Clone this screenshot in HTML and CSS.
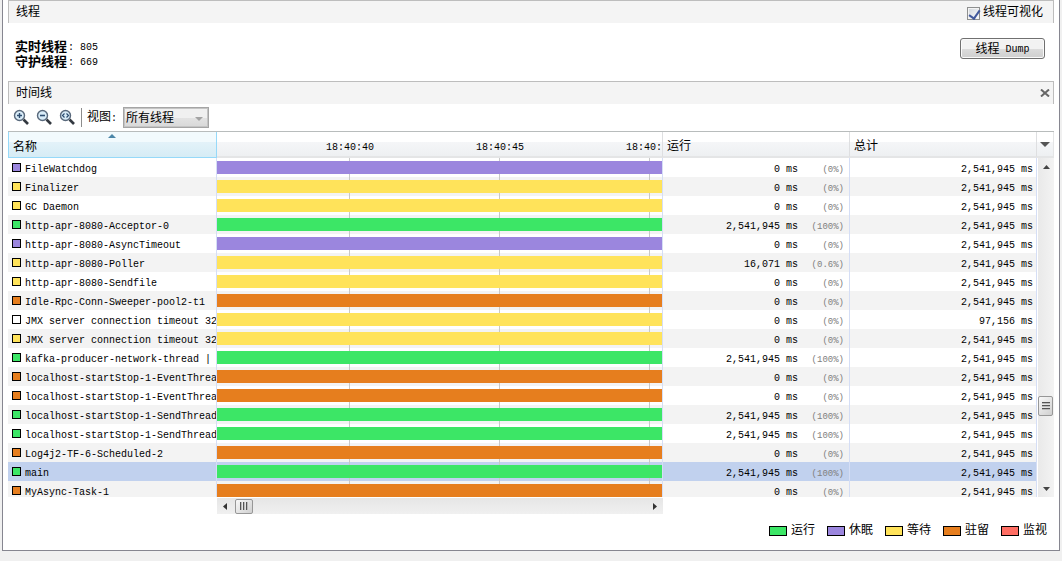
FILE: index.html
```html
<!DOCTYPE html>
<html lang="zh-CN">
<head>
<meta charset="utf-8">
<title>线程</title>
<link rel="stylesheet" href="styles.css">
</head>
<body>
<main class="frame">
  <header class="section-bar">
    <h2 class="section-title">线程</h2>
    <label class="check" for="visual"><input class="check-box" type="checkbox" id="visual" checked>线程可视化</label>
  </header>

  <section class="summary">
    <dl class="counts">
      <div class="count"><dt>实时线程</dt><dd>: 805</dd></div>
      <div class="count"><dt>守护线程</dt><dd>: 669</dd></div>
    </dl>
    <button class="dump" type="button">线程 <span class="mono">Dump</span></button>
  </section>

  <header class="section-bar timeline-bar">
    <h2 class="section-title">时间线</h2>
    <button class="close" type="button" aria-label="关闭"><svg width="10" height="8" viewBox="0 0 10 8"><path d="M1 .5L9 7.500M9 .5L1 7.500" stroke="#666" stroke-width="2" fill="none"/></svg></button>
  </header>

  <div class="toolbar">
    <button class="tool" type="button" aria-label="放大"><svg width="17" height="17" viewBox="0 0 17 17"><path d="M10.500 10.500L15 15" stroke="#333940" stroke-width="2.600"/><circle cx="6.500" cy="6.500" r="5" fill="#d9ecf8" stroke="#59697c" stroke-width="1.400"/><path d="M4 6.500H9M6.500 4V9" stroke="#2d4d70" stroke-width="1.400"/></svg></button>
    <button class="tool" type="button" aria-label="缩小"><svg width="17" height="17" viewBox="0 0 17 17"><path d="M10.500 10.500L15 15" stroke="#333940" stroke-width="2.600"/><circle cx="6.500" cy="6.500" r="5" fill="#d9ecf8" stroke="#59697c" stroke-width="1.400"/><path d="M4 6.500H9" stroke="#2d4d70" stroke-width="1.600"/></svg></button>
    <button class="tool" type="button" aria-label="适合窗口"><svg width="17" height="17" viewBox="0 0 17 17"><path d="M10.500 10.500L15 15" stroke="#333940" stroke-width="2.600"/><circle cx="6.500" cy="6.500" r="5" fill="#d9ecf8" stroke="#59697c" stroke-width="1.400"/><path d="M5.500 4.500L3.500 6.500L5.500 8.500M7.500 4.500L9.500 6.500L7.500 8.500" stroke="#2d4d70" stroke-width="1.200" fill="none"/></svg></button>
    <span class="divider"></span>
    <label class="view-label" for="view">视图<span class="mono">:</span></label>
    <span class="select-wrap">
      <select class="select" id="view"><option>所有线程</option></select>
      <svg class="select-arrow" width="8" height="4" viewBox="0 0 8 4"><path d="M0 0H8L4 4Z" fill="#a3a3a3"/></svg>
    </span>
  </div>

  <div class="grid">
    <div class="viewport">
      <table class="threads">
        <colgroup><col class="col-name"><col><col class="col-num"><col class="col-num"></colgroup>
        <thead>
          <tr>
            <th class="sorted" scope="col">名称<svg class="sort-arrow" width="8" height="4" viewBox="0 0 8 4"><path d="M4 0L8 4H0Z" fill="#4c86a8"/></svg></th>
            <th class="times" scope="col"><div class="ticks"><span>18:40:40</span><span>18:40:45</span><span>18:40:50</span></div></th>
            <th scope="col">运行</th>
            <th scope="col">总计</th>
          </tr>
        </thead>
        <tbody>
          <tr><td class="name"><i class="dot sleep"></i>FileWatchdog</td><td class="line"><div class="bar sleep"></div></td><td class="num share">0 ms<span class="pct">(0%)</span></td><td class="num">2,541,945 ms</td></tr>
          <tr><td class="name"><i class="dot wait"></i>Finalizer</td><td class="line"><div class="bar wait"></div></td><td class="num share">0 ms<span class="pct">(0%)</span></td><td class="num">2,541,945 ms</td></tr>
          <tr><td class="name"><i class="dot wait"></i>GC Daemon</td><td class="line"><div class="bar wait"></div></td><td class="num share">0 ms<span class="pct">(0%)</span></td><td class="num">2,541,945 ms</td></tr>
          <tr><td class="name"><i class="dot run"></i>http-apr-8080-Acceptor-0</td><td class="line"><div class="bar run"></div></td><td class="num share">2,541,945 ms<span class="pct">(100%)</span></td><td class="num">2,541,945 ms</td></tr>
          <tr><td class="name"><i class="dot sleep"></i>http-apr-8080-AsyncTimeout</td><td class="line"><div class="bar sleep"></div></td><td class="num share">0 ms<span class="pct">(0%)</span></td><td class="num">2,541,945 ms</td></tr>
          <tr><td class="name"><i class="dot wait"></i>http-apr-8080-Poller</td><td class="line"><div class="bar wait"></div></td><td class="num share">16,071 ms<span class="pct">(0.6%)</span></td><td class="num">2,541,945 ms</td></tr>
          <tr><td class="name"><i class="dot wait"></i>http-apr-8080-Sendfile</td><td class="line"><div class="bar wait"></div></td><td class="num share">0 ms<span class="pct">(0%)</span></td><td class="num">2,541,945 ms</td></tr>
          <tr><td class="name"><i class="dot park"></i>Idle-Rpc-Conn-Sweeper-pool2-t1</td><td class="line"><div class="bar park"></div></td><td class="num share">0 ms<span class="pct">(0%)</span></td><td class="num">2,541,945 ms</td></tr>
          <tr><td class="name"><i class="dot"></i>JMX server connection timeout 32</td><td class="line"><div class="bar wait"></div></td><td class="num share">0 ms<span class="pct">(0%)</span></td><td class="num">97,156 ms</td></tr>
          <tr><td class="name"><i class="dot wait"></i>JMX server connection timeout 32</td><td class="line"><div class="bar wait"></div></td><td class="num share">0 ms<span class="pct">(0%)</span></td><td class="num">2,541,945 ms</td></tr>
          <tr><td class="name"><i class="dot run"></i>kafka-producer-network-thread |</td><td class="line"><div class="bar run"></div></td><td class="num share">2,541,945 ms<span class="pct">(100%)</span></td><td class="num">2,541,945 ms</td></tr>
          <tr><td class="name"><i class="dot park"></i>localhost-startStop-1-EventThrea</td><td class="line"><div class="bar park"></div></td><td class="num share">0 ms<span class="pct">(0%)</span></td><td class="num">2,541,945 ms</td></tr>
          <tr><td class="name"><i class="dot park"></i>localhost-startStop-1-EventThrea</td><td class="line"><div class="bar park"></div></td><td class="num share">0 ms<span class="pct">(0%)</span></td><td class="num">2,541,945 ms</td></tr>
          <tr><td class="name"><i class="dot run"></i>localhost-startStop-1-SendThread</td><td class="line"><div class="bar run"></div></td><td class="num share">2,541,945 ms<span class="pct">(100%)</span></td><td class="num">2,541,945 ms</td></tr>
          <tr><td class="name"><i class="dot run"></i>localhost-startStop-1-SendThread</td><td class="line"><div class="bar run"></div></td><td class="num share">2,541,945 ms<span class="pct">(100%)</span></td><td class="num">2,541,945 ms</td></tr>
          <tr><td class="name"><i class="dot park"></i>Log4j2-TF-6-Scheduled-2</td><td class="line"><div class="bar park"></div></td><td class="num share">0 ms<span class="pct">(0%)</span></td><td class="num">2,541,945 ms</td></tr>
          <tr class="selected"><td class="name"><i class="dot run"></i>main</td><td class="line"><div class="bar run"></div></td><td class="num share">2,541,945 ms<span class="pct">(100%)</span></td><td class="num">2,541,945 ms</td></tr>
          <tr><td class="name"><i class="dot park"></i>MyAsync-Task-1</td><td class="line"><div class="bar park"></div></td><td class="num share">0 ms<span class="pct">(0%)</span></td><td class="num">2,541,945 ms</td></tr>
        </tbody>
      </table>
    </div>
    <div class="side">
      <button class="columns" type="button" aria-label="选择列"><svg width="10" height="5" viewBox="0 0 10 5"><path d="M0 0H10L5 5Z" fill="#555"/></svg></button>
      <div class="vscroll">
        <button class="step" type="button" aria-label="向上"><svg width="7" height="4" viewBox="0 0 7 4"><path d="M3.500 0L7 4H0Z" fill="#444"/></svg></button>
        <span class="before"></span>
        <span class="thumb"><svg width="8" height="8" viewBox="0 0 8 8"><path d="M0 .5H8M0 3.500H8M0 6.500H8" stroke="#555"/><path d="M0 1.500H8M0 4.500H8M0 7.500H8" stroke="#bbb"/></svg></span>
        <span class="after"></span>
        <button class="step" type="button" aria-label="向下"><svg width="7" height="4" viewBox="0 0 7 4"><path d="M0 0H7L3.500 4Z" fill="#444"/></svg></button>
      </div>
    </div>
  </div>

  <div class="hscroll">
    <button class="step" type="button" aria-label="向左"><svg width="4" height="7" viewBox="0 0 4 7"><path d="M4 0V7L0 3.500Z" fill="#333"/></svg></button>
    <span class="thumb"><svg width="8" height="8" viewBox="0 0 8 8"><path d="M.5 0V8M3.500 0V8M6.500 0V8" stroke="#555"/><path d="M1.500 0V8M4.500 0V8M7.500 0V8" stroke="#bbb"/></svg></span>
    <button class="step end" type="button" aria-label="向右"><svg width="4" height="7" viewBox="0 0 4 7"><path d="M0 0L4 3.500L0 7Z" fill="#333"/></svg></button>
  </div>

  <ul class="legend">
    <li><i class="key run"></i>运行</li>
    <li><i class="key sleep"></i>休眠</li>
    <li><i class="key wait"></i>等待</li>
    <li><i class="key park"></i>驻留</li>
    <li><i class="key monitor"></i>监视</li>
  </ul>
</main>
</body>
</html>
```
FILE: styles.css
```css
* { box-sizing: border-box; }

body {
  display: flex;
  height: 100vh;
  margin: 0;
  background: #f0f0f0;
  color: #000;
  font: 12px/16px "Liberation Mono", "Noto Sans CJK SC", monospace;
}

button, select, input { margin: 0; padding: 0; font: inherit; color: inherit; }
button { display: flex; align-items: center; justify-content: center; border: 0; background: none; }
svg { display: block; flex: none; }
.mono { font-size: 10px; }

.run { background: #3ce666; }
.sleep { background: #9b86de; }
.wait { background: #ffe35a; }
.park { background: #e67e1e; }
.monitor { background: #ff6e64; }

.frame {
  display: flex;
  flex: 1;
  flex-direction: column;
  min-width: 0;
  margin: 0 2px 10px;
  padding: 0 5px;
  border: solid #868690;
  border-width: 0 1px 1px;
  background: #fff;
}

.section-bar {
  display: flex;
  flex: none;
  align-items: center;
  justify-content: space-between;
  height: 23px;
  padding: 2px 10px 0 7px;
  border: solid #bdbdbd;
  border-width: 1px 1px 0;
  background: #f4f4f4;
}
.timeline-bar { padding-right: 2px; }
.section-title { margin: 0; font-size: 12px; font-weight: 400; }
.check { display: flex; align-items: center; gap: 3px; }
.check-box {
  width: 13px;
  height: 13px;
  appearance: none;
  border: 1px solid #8e8f8f;
  outline: 1px solid #f4f4f4;
  outline-offset: -2px;
  background: linear-gradient(135deg, #cfd4da, #fff);
  position: relative;
}
.check-box:checked::after {
  content: "";
  position: absolute;
  left: 3px;
  top: 0;
  width: 5px;
  height: 9px;
  border: solid #42599c;
  border-width: 0 2px 2px 0;
  transform: rotate(35deg);
}
.close { width: 12px; height: 12px; margin-bottom: 2px; }

.summary {
  display: flex;
  flex: none;
  justify-content: space-between;
  height: 58px;
  padding: 15px 9px 0 7px;
}
.counts { margin: 0; padding-top: 2px; }
.count { display: flex; height: 15px; align-items: center; }
.count dt { font-size: 13px; font-weight: 700; }
.count dd { margin: 0 0 0 1px; font-size: 10px; }
.dump {
  gap: 6px;
  width: 85px;
  height: 21px;
  padding-top: 2px;
  border: 1px solid #707070;
  border-radius: 3px;
  background: linear-gradient(#f2f2f2 50%, #dcdcdc 50%, #cfcfcf);
  box-shadow: inset 0 0 0 1px #fafafa;
}

.toolbar {
  display: flex;
  flex: none;
  align-items: center;
  height: 27px;
  padding-left: 5px;
}
.tool { width: 17px; height: 17px; margin-right: 6px; }
.divider { width: 1px; height: 19px; margin: 0 5px 0 -1px; background: #8c8c8c; }
.view-label { margin-right: 6px; padding-top: 2px; }
.select-wrap { position: relative; }
.select {
  display: block;
  width: 86px;
  height: 21px;
  padding: 2px 0 0 2px;
  appearance: none;
  border: 1px solid #a5a5a5;
  outline: 1px solid #c4c4c4;
  outline-offset: -2px;
  border-radius: 0;
  background: linear-gradient(#f0f0f0 50%, #e3e3e3 50%, #d8d8d8);
}
.select-arrow { position: absolute; right: 6px; top: 10px; }

.grid {
  display: grid;
  flex: 1;
  grid-template-columns: minmax(0, 1fr) 17px;
  grid-template-rows: minmax(0, 1fr);
  min-height: 0;
  border-top: 1px solid #b8bcbc;
}
.viewport { overflow: hidden; }
.threads { width: 100%; table-layout: fixed; border-collapse: separate; border-spacing: 0; }
.col-name { width: 209px; }
.col-num { width: 187px; }

.threads th {
  position: relative;
  height: 26px;
  padding: 6px 5px 0 4px;
  border-right: 1px solid #dedfe1;
  border-bottom: 2px solid #e4e5e6;
  background: linear-gradient(#fff 40%, #f5f6f8 40%, #eef0f2);
  font-weight: 400;
  text-align: left;
}
.threads th.sorted {
  border: 1px solid #96d9f9;
  border-top: 0;
  background: linear-gradient(#f2fafd 40%, #e3f2f9 40%, #d6ecf5);
}
.threads th.times { padding-top: 7px; padding-right: 0; padding-left: 58px; }
.sort-arrow { position: absolute; left: 48%; top: 2px; }
.ticks { display: flex; overflow: hidden; }
.ticks span { flex: none; width: 150px; text-align: center; font-size: 10px; }

.threads td {
  height: 19px;
  padding: 0;
  border-right: 1px solid #d5def5;
  font-size: 10px;
  line-height: 14px;
  white-space: pre;
}
.threads tr:nth-child(even) td { background-color: #f3f3f3; }
.threads .selected td { background-color: #c1d1ee; }
.threads td.name { overflow: hidden; padding: 5px 0 0 4px; }
.dot {
  display: inline-block;
  width: 9px;
  height: 9px;
  margin-right: 4px;
  border: 1px solid #000;
}
.line {
  background-image: linear-gradient(90deg, #c8c8c8 1px, transparent 1px);
  background-position: 132px 0;
  background-size: 150px 100%;
}
.bar { height: 13px; }
.threads td.num { padding: 5px 3px 0 0; text-align: right; }
.threads td.share { padding-right: 5px; }
.pct { display: inline-block; width: 46px; color: #808080; font-size: 9px; }

.side { display: flex; flex-direction: column; }
.columns {
  flex: none;
  height: 26px;
  border: solid #e4e5e6;
  border-width: 0 1px 2px 0;
  background: linear-gradient(#fff 40%, #f5f6f8 40%, #eef0f2);
}
.vscroll { display: flex; flex: 1; flex-direction: column; margin-left: 1px; background: linear-gradient(90deg, #e9e9e9, #f3f3f3); }
.step { flex: none; width: 16px; height: 17px; }
.before { flex: 223; }
.after { flex: 64; }
.thumb {
  display: flex;
  flex: none;
  align-items: center;
  justify-content: center;
  border: 1px solid #979797;
  border-radius: 2px;
  background: linear-gradient(135deg, #f8f8f8, #d0d0d0);
}
.vscroll .thumb { width: 15px; height: 20px; }

.hscroll {
  display: flex;
  flex: none;
  align-items: center;
  height: 16px;
  margin: 1px 391px 0 209px;
  background: linear-gradient(#e6e6e6, #f0f0f0);
}
.hscroll .thumb { width: 18px; height: 15px; margin-left: 2px; }
.end { margin-left: auto; }

.legend {
  display: flex;
  flex: none;
  justify-content: flex-end;
  gap: 12px;
  margin: 0;
  padding: 9px 7px 11px;
  list-style: none;
}
.legend li { display: flex; align-items: center; gap: 4px; }
.key { width: 18px; height: 10px; border: 1px solid #000; }
```
